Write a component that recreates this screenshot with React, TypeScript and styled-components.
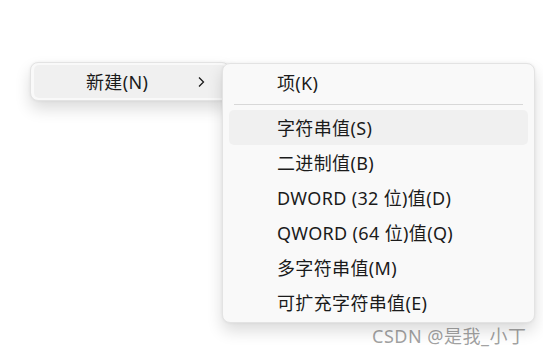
import React from "react";
import styled, { createGlobalStyle } from "styled-components";

const Global = createGlobalStyle`
  html, body { margin: 0; padding: 0; background: #ffffff; }
  body { width: 543px; height: 353px; overflow: hidden; }
  #root { width: 543px; height: 353px; }
`;

const Desktop = styled.div`
  position: relative;
  width: 543px;
  height: 353px;
  background: #ffffff;
  font-family: "Noto Sans", "Noto Sans CJK SC", sans-serif;
  color: #1b1b1b;
`;

const MenuPanel = styled.div<{ $x: number; $y: number; $w: number }>`
  position: absolute;
  left: ${(p) => p.$x}px;
  top: ${(p) => p.$y}px;
  width: ${(p) => p.$w}px;
  box-sizing: border-box;
  background: #f9f9f9;
  border: 1px solid #e3e3e3;
  border-radius: 8px;
  box-shadow: 0 8px 16px rgba(0, 0, 0, 0.14), 0 0 3px rgba(0, 0, 0, 0.06);
  display: flex;
  flex-direction: column;
`;

const ParentMenu = styled(MenuPanel)`
  padding: 2px 3px 2px 3px;
`;

const SubMenu = styled(MenuPanel)`
  padding: 1px 6px 2px 6px;
  z-index: 2;
`;

const Item = styled.div<{ $active?: boolean; $h: number; $indent: number }>`
  display: flex;
  align-items: center;
  height: ${(p) => p.$h}px;
  padding-left: ${(p) => p.$indent}px;
  padding-right: 12px;
  border-radius: 5px;
  background: ${(p) => (p.$active ? "#f0f0f0" : "transparent")};
  font-size: 18px;
  letter-spacing: 0.35px;
  white-space: nowrap;
  line-height: 1;
`;

const Label = styled.span`
  flex: 1;
`;

const Chevron = styled.svg`
  width: 10px;
  height: 12px;
  margin-right: 8px;
`;

const Separator = styled.div`
  height: 1px;
  background: #d8d8d8;
  margin: 4px 5px 5px 5px;
`;

const Watermark = styled.div`
  position: absolute;
  left: 372px;
  top: 322px;
  font-family: "Noto Sans", "Noto Sans CJK SC", sans-serif;
  font-size: 18px;
  letter-spacing: 0.5px;
  color: rgba(120, 120, 120, 0.7);
  white-space: nowrap;
`;

const subItems = [
  { label: "字符串值(S)", active: true },
  { label: "二进制值(B)" },
  { label: "DWORD (32 位)值(D)" },
  { label: "QWORD (64 位)值(Q)" },
  { label: "多字符串值(M)" },
  { label: "可扩充字符串值(E)" },
];

export default function App() {
  return (
    <Desktop>
      <Global />
      <ParentMenu $x={30} $y={62} $w={200}>
        <Item $active $h={33} $indent={52}>
          <Label>新建(N)</Label>
          <Chevron viewBox="0 0 10 12">
            <path d="M3 1.5 L7.5 6 L3 10.5" fill="none" stroke="#1b1b1b" strokeWidth="1.3" />
          </Chevron>
        </Item>
      </ParentMenu>
      <SubMenu $x={222} $y={63} $w={313}>
        <Item $h={35} $indent={48}>
          <Label>项(K)</Label>
        </Item>
        <Separator />
        {subItems.map((it) => (
          <Item key={it.label} $active={it.active} $h={35} $indent={48}>
            <Label>{it.label}</Label>
          </Item>
        ))}
      </SubMenu>
      <Watermark>CSDN @是我_小丁</Watermark>
    </Desktop>
  );
}
